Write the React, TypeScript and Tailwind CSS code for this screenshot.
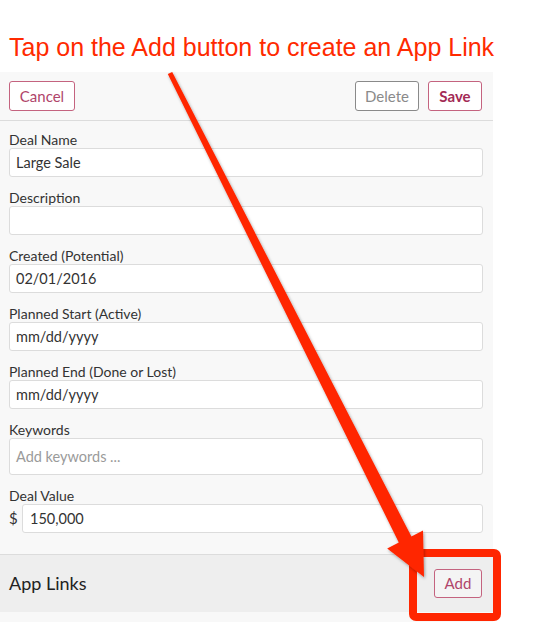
import React from 'react';

const fields = [
  { label: 'Deal Name', value: 'Large Sale' },
  { label: 'Description', value: '' },
  { label: 'Created (Potential)', value: '02/01/2016' },
  { label: 'Planned Start (Active)', value: 'mm/dd/yyyy' },
  { label: 'Planned End (Done or Lost)', value: 'mm/dd/yyyy' },
];

function Field({ label, value }: { label: string; value: string }) {
  return (
    <div className="flex flex-col">
      <div className="h-[17px] text-[14px] leading-[17px] text-[#333]">{label}</div>
      <div className="h-[29px] bg-white border border-[#dcdcdc] rounded-[3px] px-[6px] flex items-center text-[14.5px] text-[#333]">
        {value}
      </div>
    </div>
  );
}

export default function App() {
  return (
    <div className="relative w-[533px] h-[622px] overflow-hidden bg-white font-['Lato',sans-serif]">
      <div className="h-[72px] pt-[33px] pl-[9px] text-[25px] leading-[28px] text-[#ff2a00] font-['Liberation_Sans',Arial,sans-serif] whitespace-nowrap">
        Tap on the Add button to create an App Link
      </div>

      <div className="w-[493px] h-[550px] bg-[#f8f8f8] flex flex-col">
        <div className="h-[49px] border-b border-[#dcdcdc] flex items-start pt-[9px] pl-[9px] pr-[11px]">
          <button className="h-[30px] w-[66px] border border-[#c4637f] rounded-[3px] text-[15px] text-[#b0456a] bg-white">
            Cancel
          </button>
          <div className="flex-1" />
          <button className="h-[30px] w-[64px] border border-[#8a8a8a] rounded-[3px] text-[15px] text-[#8a8a8a] bg-white">
            Delete
          </button>
          <button className="ml-[9px] h-[30px] w-[54px] border border-[#c4637f] rounded-[3px] text-[15px] font-bold text-[#a32a55] bg-white">
            Save
          </button>
        </div>

        <div className="flex flex-col gap-[12px] pt-[10px] pl-[9px] pr-[10px] pb-[21px] border-b border-[#dcdcdc]">
          {fields.map((f) => (
            <Field key={f.label} label={f.label} value={f.value} />
          ))}
          <div className="flex flex-col">
            <div className="h-[17px] text-[14px] leading-[17px] text-[#333]">Keywords</div>
            <div className="h-[37px] bg-white border border-[#dcdcdc] rounded-[3px] px-[6px] flex items-center text-[14.5px] text-[#9a9a9a]">
              Add keywords ...
            </div>
          </div>
          <div className="flex flex-col">
            <div className="h-[17px] text-[14px] leading-[17px] text-[#333]">Deal Value</div>
            <div className="flex items-center">
              <span className="w-[13px] text-[15px] text-[#333]">$</span>
              <div className="flex-1 h-[29px] bg-white border border-[#dcdcdc] rounded-[3px] px-[7px] flex items-center text-[14.5px] text-[#333]">
                150,000
              </div>
            </div>
          </div>
        </div>

        <div className="h-[57px] bg-[#eeeeee] flex items-center pl-[9px] pr-[11px]">
          <span className="flex-1 text-[18px] text-[#222]">App Links</span>
          <button className="h-[29px] w-[48px] border border-[#c4637f] rounded-[3px] text-[15px] text-[#b0456a] bg-[#f4f4f4]">
            Add
          </button>
        </div>
      </div>

      <svg className="absolute inset-0 pointer-events-none" width="533" height="622" viewBox="0 0 533 622">
        <defs>
          <filter id="sh" x="-20%" y="-20%" width="140%" height="140%">
            <feDropShadow dx="1" dy="1.5" stdDeviation="1.5" floodColor="#000" floodOpacity="0.35" />
          </filter>
        </defs>
        <rect x="413" y="553" width="84" height="64" rx="3" fill="none" stroke="#ff2600" strokeWidth="8" />
        <polygon
          filter="url(#sh)"
          fill="#ff2600"
          points="172.2,71.9 411.4,536.4 423,530.5 424,577 387.2,548.5 398.8,542.6 167.8,74.1"
        />
      </svg>
    </div>
  );
}
